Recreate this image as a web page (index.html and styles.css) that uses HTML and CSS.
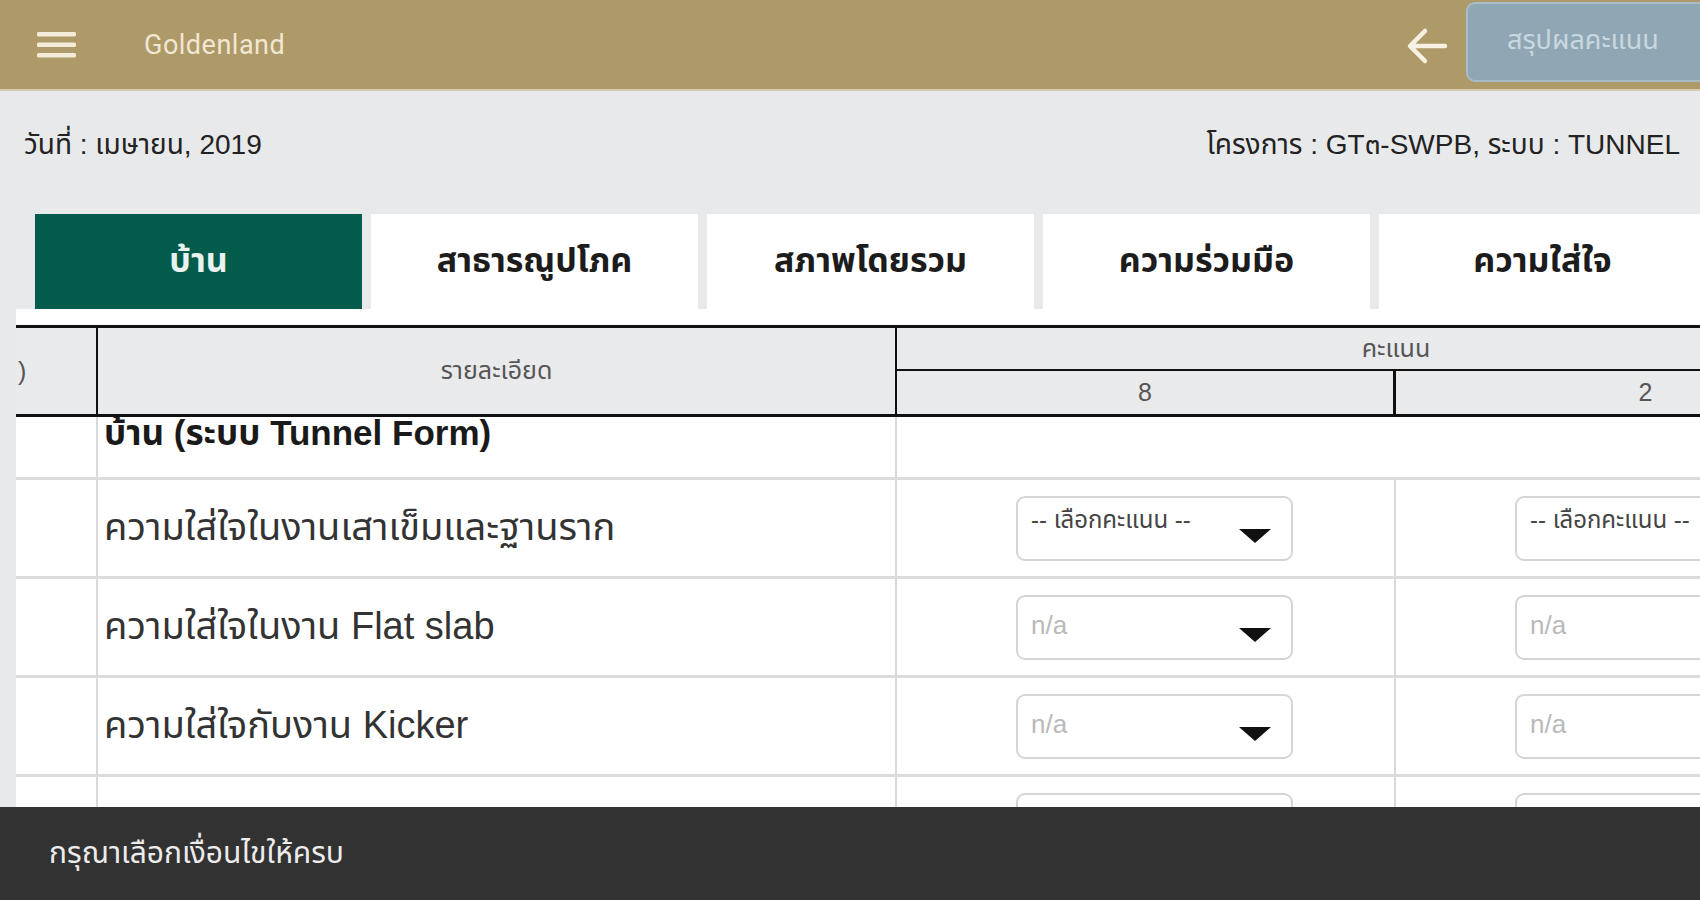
FILE: index.html
```html
<!DOCTYPE html>
<html lang="th">
<head>
<meta charset="utf-8">
<title>Goldenland</title>
<link rel="stylesheet" href="styles.css">
</head>
<body>
<header class="appbar">
  <div class="menu" aria-label="menu">
    <svg width="40" height="26" viewBox="0 0 40 26"><rect x="0" y="0" width="39" height="4.5" rx="1.5" fill="#f4ecd9"/><rect x="0" y="10.5" width="39" height="4.5" rx="1.5" fill="#f4ecd9"/><rect x="0" y="21" width="39" height="4.5" rx="1.5" fill="#f4ecd9"/></svg>
  </div>
  <div class="brand">Goldenland</div>
  <div class="spacer"></div>
  <div class="back" aria-label="back">
    <svg width="42" height="38" viewBox="0 0 42 38"><path d="M39 19H5M19 4L4 19l15 15" fill="none" stroke="#f7f1e3" stroke-width="4.5" stroke-linecap="round" stroke-linejoin="round"/></svg>
  </div>
  <div class="summary">สรุปผลคะแนน</div>
</header>

<section class="info">
  <div class="date">วันที่ : เมษายน, 2019</div>
  <div class="project">โครงการ : GT๓-SWPB, ระบบ : TUNNEL</div>
</section>

<nav class="tabs">
  <div class="tab active">บ้าน</div>
  <div class="tab">สาธารณูปโภค</div>
  <div class="tab">สภาพโดยรวม</div>
  <div class="tab">ความร่วมมือ</div>
  <div class="tab">ความใส่ใจ</div>
</nav>
<div class="tab-foot"></div>

<div class="grid-wrap">
  <table class="grid">
    <colgroup><col class="c-no"><col class="c-detail"><col class="c-score"><col class="c-score"></colgroup>
    <thead>
      <tr class="h1">
        <th rowspan="2" class="h-no">)</th>
        <th rowspan="2" class="h-detail">รายละเอียด</th>
        <th colspan="2" class="h-score">คะแนน</th>
      </tr>
      <tr class="h2">
        <th class="h-s1">8</th>
        <th class="h-s2">2</th>
      </tr>
    </thead>
    <tbody>
      <tr class="r-group">
        <td></td>
        <td class="group-cell"><div class="group-title">บ้าน (ระบบ Tunnel Form)</div></td>
        <td colspan="2" class="last"></td>
      </tr>
      <tr>
        <td></td>
        <td class="item">ความใส่ใจในงานเสาเข็มและฐานราก</td>
        <td><div class="select"><span class="ph">-- เลือกคะแนน --</span><span class="caret"></span></div></td>
        <td class="last"><div class="select"><span class="ph">-- เลือกคะแนน --</span><span class="caret"></span></div></td>
      </tr>
      <tr>
        <td></td>
        <td class="item">ความใส่ใจในงาน Flat slab</td>
        <td><div class="select"><span class="na">n/a</span><span class="caret"></span></div></td>
        <td class="last"><div class="select"><span class="na">n/a</span><span class="caret"></span></div></td>
      </tr>
      <tr>
        <td></td>
        <td class="item">ความใส่ใจกับงาน Kicker</td>
        <td><div class="select"><span class="na">n/a</span><span class="caret"></span></div></td>
        <td class="last"><div class="select"><span class="na">n/a</span><span class="caret"></span></div></td>
      </tr>
      <tr class="r-peek">
        <td></td>
        <td class="item"><div class="peek">ความใส่ใจในงานผนัง</div></td>
        <td><div class="select"><span class="na">n/a</span><span class="caret"></span></div></td>
        <td class="last"><div class="select"><span class="na">n/a</span><span class="caret"></span></div></td>
      </tr>
    </tbody>
  </table>
</div>

<div class="snackbar">กรุณาเลือกเงื่อนไขให้ครบ</div>
</body>
</html>
```

FILE: styles.css
```css
* { box-sizing: border-box; }
html, body {
  margin: 0;
  padding: 0;
  height: 100%;
  overflow: hidden;
}
body {
  background: #e8e9eb;
  font-family: "Liberation Sans", "Roboto", "Noto Sans Thai", "Noto Sans", sans-serif;
  color: #222;
}

/* app bar */
.appbar {
  height: 91px;
  background: #ae9a69;
  border-bottom: 2px solid #d9ccae;
  display: flex;
  align-items: center;
}
.menu {
  margin-left: 37px;
  width: 40px;
  height: 26px;
  display: flex;
}
.brand {
  margin-left: 67px;
  color: #f1e7d2;
  font-family: "Roboto", "Liberation Sans", sans-serif;
  font-size: 27px;
  letter-spacing: 0.5px;
}
.spacer { flex: 1; }
.back {
  width: 42px;
  height: 38px;
  display: flex;
  margin-right: 18px;
  margin-top: 2px;
}
.summary {
  align-self: flex-start;
  margin-top: 2px;
  width: 250px;
  height: 80px;
  margin-right: -16px;
  background: #8fa7b4;
  border: 2px solid #a7bcc7;
  border-radius: 9px;
  color: #c9d7df;
  font-size: 27px;
  display: flex;
  align-items: center;
  padding-left: 39px;
  padding-bottom: 4px;
  white-space: nowrap;
}

/* info line */
.info {
  display: flex;
  justify-content: space-between;
  padding: 38px 20px 53px 24px;
  font-size: 28px;
  line-height: 32px;
  color: #222;
}

/* tabs */
.tabs {
  display: flex;
  gap: 9px;
  padding-left: 35px;
  height: 95px;
  overflow: hidden;
}
.tab {
  flex: 0 0 327px;
  background: #fff;
  display: flex;
  align-items: center;
  justify-content: center;
  font-size: 34px;
  font-weight: bold;
  color: #1c1c1c;
  white-space: nowrap;
}
.tab.active {
  background: #035c4b;
  color: #e9f2ee;
}
.tab-foot {
  margin-left: 16px;
  height: 16px;
  background: #fff;
}

/* table */
.grid-wrap {
  margin-left: 16px;
  overflow: hidden;
  border-top: 3px solid #111;
}
.grid {
  table-layout: fixed;
  width: 1879px;
  border-collapse: separate;
  border-spacing: 0;
}
.c-no { width: 82px; }
.c-detail { width: 799px; }
.c-score { width: 499px; }

.grid th {
  background: #e9eaec;
  font-weight: normal;
  font-size: 25px;
  color: #555;
  padding: 0;
}
.h1 th { height: 43px; }
.h2 th { height: 46px; border-bottom: 3px solid #111; }
.h-no {
  text-align: left;
  padding-left: 2px !important;
  border-right: 2px solid #111;
  border-bottom: 3px solid #111;
}
.h-detail {
  border-right: 2px solid #111;
  border-bottom: 3px solid #111;
}
.h-score {
  border-bottom: 2px solid #111;
  vertical-align: middle;
}
.h-s1 { border-right: 3px solid #111; }

.grid td {
  background: #fff;
  border-right: 2px solid #d9d9d9;
  border-bottom: 3px solid #dcdcdc;
  height: 99px;
  padding: 0;
  vertical-align: middle;
}
.grid td.last { border-right: 0; }
.r-group td { height: 63px; }
.group-cell {
  vertical-align: top !important;
}
.group-title {
  height: 60px;
  overflow: hidden;
  padding-top: 0;
  padding-left: 6px;
  font-size: 35px;
  font-weight: bold;
  line-height: 32px;
  color: #1a1a1a;
  white-space: nowrap;
}
.item {
  font-size: 38px;
  color: #333;
  padding-left: 6px !important;
  white-space: nowrap;
}
.r-peek .item { vertical-align: top; }
.peek {
  padding-top: 28px;
  line-height: 44px;
}

/* select */
.select {
  margin-left: 119px;
  width: 277px;
  height: 65px;
  border: 2px solid #d5d5d5;
  border-radius: 9px;
  background: #fff;
  display: flex;
  align-items: flex-start;
  justify-content: space-between;
  padding: 8px 20px 0 13px;
  white-space: nowrap;
}
.ph {
  font-size: 24px;
  color: #444;
  line-height: 28px;
}
.na {
  font-size: 26px;
  color: #b9b9b9;
  line-height: 30px;
  padding-top: 5px;
}
.caret {
  width: 0;
  height: 0;
  margin-top: 23px;
  border-left: 16px solid transparent;
  border-right: 16px solid transparent;
  border-top: 14px solid #111;
}

/* snackbar */
.snackbar {
  position: fixed;
  left: 0;
  right: 0;
  bottom: 0;
  height: 93px;
  background: #323232;
  color: #ececec;
  font-size: 30px;
  display: flex;
  align-items: center;
  padding-left: 49px;
}
```
